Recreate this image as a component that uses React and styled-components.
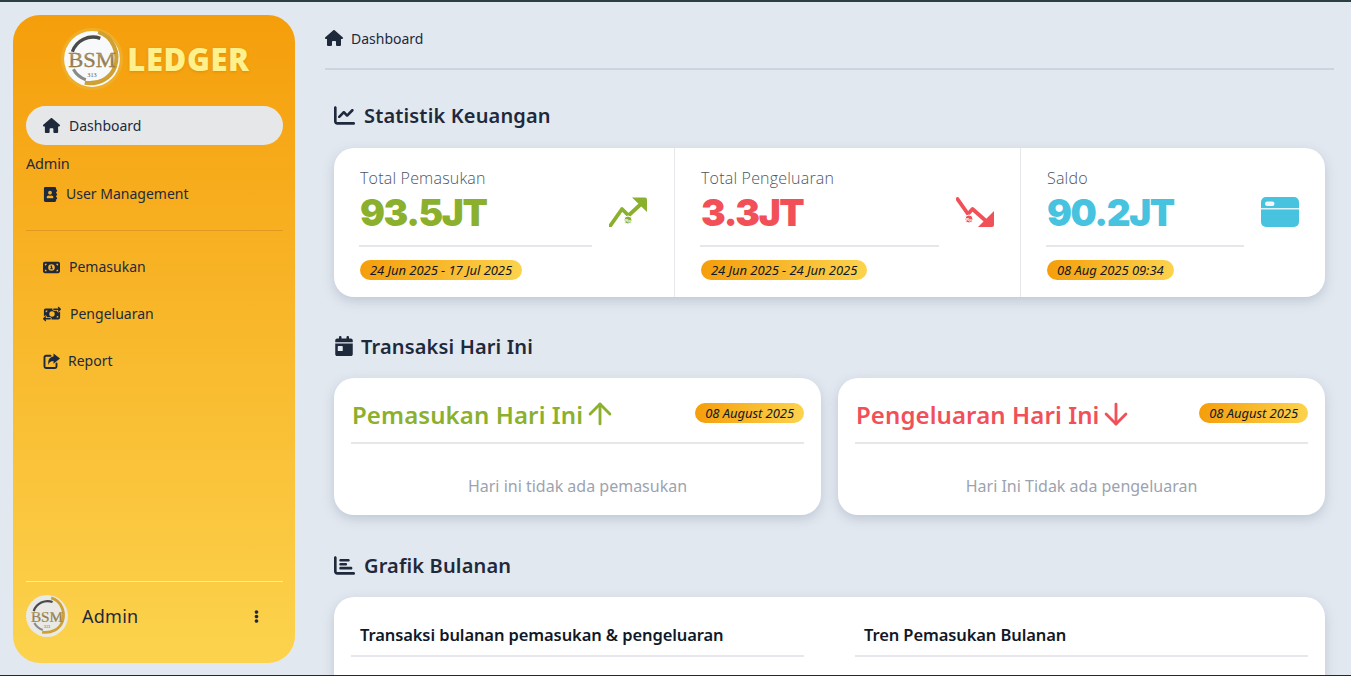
import React from "react";
import styled, { createGlobalStyle } from "styled-components";
import { FaAddressBook, FaEllipsisV } from "react-icons/fa";
import { FaHouse, FaMoneyBill1, FaMoneyBillTransfer, FaChartLine, FaCalendarDay, FaChartBar } from "react-icons/fa6";
import { ArrowUp, ArrowDown } from "lucide-react";

const Global = createGlobalStyle`
  html, body { margin: 0; padding: 0; height: 100%; overflow: hidden; }
  body { font-family: "Noto Sans", "Open Sans", sans-serif; background: #e2e8f0; color: #1e293b; }
  * { box-sizing: border-box; }
`;

const Frame = styled.div`
  height: 676px;
  display: flex;
  overflow: hidden;
  border-top: 2px solid #2c3e3f;
  border-bottom: 1px solid #1f2933;
  background: #e2e8f0;
`;

const Sidebar = styled.aside`
  flex: 0 0 282px;
  margin: 13px 0 12px 13px;
  padding: 13px 12px 26px 13px;
  border-radius: 27px;
  background: linear-gradient(180deg, #f59e0b 0%, #fcd34d 100%);
  display: flex;
  flex-direction: column;
`;

const Brand = styled.div`
  display: flex;
  align-items: center;
  justify-content: center;
  gap: 4px;
  height: 62px;
  margin-bottom: 16px;
  padding-left: 2px;
`;

const BrandName = styled.span`
  font-family: "Open Sans", sans-serif;
  font-weight: 800;
  font-size: 31px;
  letter-spacing: 0.6px;
  color: #fef08a;
  text-shadow: 0 1px 3px rgba(180, 100, 0, 0.35);
`;

const NavItem = styled.div`
  height: ${(p) => (p.$active ? "39px" : "auto")};
  display: flex;
  align-items: center;
  gap: ${(p) => p.$gap || 9}px;
  padding-left: ${(p) => p.$indent || 17}px;
  margin-top: ${(p) => p.$top || 0}px;
  border-radius: 20px;
  font-size: 14px;
  line-height: 20px;
  color: #1e293b;
  background: ${(p) => (p.$active ? "#e5e7e8" : "transparent")};
  svg { flex: none; }
`;

const GroupLabel = styled.div`
  margin-top: 8px;
  font-size: 14.5px;
  line-height: 20px;
  letter-spacing: -0.2px;
  color: #1e293b;
`;

const SideRule = styled.hr`
  border: 0;
  height: 1px;
  margin: 26px 0 26px;
  background: #e0981f;
`;

const Footer = styled.div`
  margin-top: auto;
  border-top: 1px solid #fdecae;
  padding-top: 13px;
  display: flex;
  align-items: center;
  gap: 14px;
`;

const UserName = styled.span`
  flex: 1;
  font-size: 18px;
  letter-spacing: 0.25px;
  color: #1e293b;
`;

const Kebab = styled.span`
  display: flex;
  margin-right: 20px;
`;

const Main = styled.main`
  flex: 1;
  min-width: 0;
  padding: 0 17px 0 30px;
`;

const Crumb = styled.div`
  height: 68px;
  display: flex;
  align-items: center;
  gap: 8px;
  padding-top: 6px;
  border-bottom: 2px solid #cbd5e1;
  font-size: 14px;
  color: #1e293b;
`;

const Content = styled.div`
  padding: 0 9px;
`;

const SectionTitle = styled.h2`
  margin: ${(p) => p.$top}px 0 ${(p) => p.$bottom}px;
  height: 28px;
  display: flex;
  align-items: center;
  gap: ${(p) => p.$gap || 9}px;
  font-size: 20px;
  font-weight: 600;
  letter-spacing: 0.15px;
  color: #1e293b;
`;

const Card = styled.div`
  background: #fff;
  border-radius: 20px;
  box-shadow: 0 4px 12px rgba(100, 116, 139, 0.28);
`;

const StatCard = styled(Card)`
  height: 149px;
  display: grid;
  grid-template-columns: 340px 346px 1fr;
`;

const Stat = styled.div`
  display: flex;
  gap: 17px;
  padding: 19px ${(p) => (p.$first ? 27 : 26)}px 0 25px;
  border-left: ${(p) => (p.$first ? "0" : "1px solid #e5e7eb")};
`;

const StatBody = styled.div`
  flex: 1;
  min-width: 0;
`;

const StatLabel = styled.div`
  padding-left: 1px;
  font-family: "Open Sans", sans-serif;
  font-weight: 300;
  font-size: 16px;
  line-height: 22px;
  letter-spacing: 0.2px;
  color: #4b5563;
`;

const StatValue = styled.div`
  padding: 2px 0 7px 1px;
  height: 47px;
  font-family: Inter, "Open Sans", sans-serif;
  font-weight: 900;
  font-size: 37px;
  line-height: 44px;
  letter-spacing: -1.4px;
  color: ${(p) => p.$color};
  border-bottom: 2px solid #e5e7eb;
  box-sizing: content-box;
`;

const Badge = styled.span`
  display: inline-block;
  height: 20px;
  padding: 0 10px;
  border-radius: 10px;
  background: linear-gradient(90deg, #f59e0b, #fcd34d);
  font-style: italic;
  font-size: 13px;
  line-height: 20px;
  letter-spacing: -0.05px;
  white-space: nowrap;
  color: #111827;
`;

const StatBadge = styled(Badge)`
  margin: 13px 0 0 1px;
`;

const StatIcon = styled.div`
  flex: 0 0 38px;
  margin-top: 30px;
  height: 30px;
  color: ${(p) => p.$color};
  svg { display: block; }
`;

const TwoCols = styled.div`
  display: grid;
  grid-template-columns: 1fr 1fr;
  gap: 17px;
`;

const TodayCard = styled(Card)`
  height: 137px;
  padding: 0 17px;
`;

const TodayHead = styled.div`
  height: 66px;
  display: flex;
  justify-content: space-between;
  border-bottom: 2px solid #e5e7eb;
`;

const TodayTitle = styled.div`
  display: flex;
  align-items: center;
  gap: 6px;
  height: 64px;
  padding: 8px 0 0 1px;
  font-size: 24px;
  font-weight: 600;
  letter-spacing: 0.1px;
  color: ${(p) => p.$color};
`;

const TodayArrow = styled.span`
  display: flex;
  margin: -6px -6px -6px -6px;
`;

const TodayBadge = styled(Badge)`
  margin-top: 25px;
`;

const Empty = styled.div`
  margin-top: 31px;
  text-align: center;
  font-size: 16px;
  line-height: 22px;
  color: #9ca3af;
`;

const ChartsCard = styled(Card)`
  height: 400px;
  padding: 24px 17px;
  display: grid;
  grid-template-columns: 1fr 1fr;
  column-gap: 51px;
  align-content: start;
`;

const ChartHead = styled.div`
  height: 36px;
  padding: 3px 9px 0;
  border-bottom: 2px solid #e5e7eb;
  font-size: 16.5px;
  font-weight: 600;
  line-height: 22px;
  letter-spacing: -0.1px;
  color: #111827;
`;

function Logo({ size, id, ring }) {
  return (
    <svg width={size} height={size} viewBox="0 0 60 60" role="img" aria-label="BSM logo" style={{ flex: "none" }}>
      <defs>
        <linearGradient id={id} x1="0" y1="0" x2="0" y2="1">
          <stop offset="0" stopColor="#d9b36a" />
          <stop offset="0.55" stopColor="#8f7b55" />
          <stop offset="1" stopColor="#c79a3c" />
        </linearGradient>
      </defs>
      {ring && <circle cx="30" cy="30" r="30" fill="#efae2a" />}
      <circle cx="30" cy="30" r={ring ? 27 : 30} fill={ring ? "#f8f9fb" : "#e9e9e6"} />
      <path d="M11 23 A 21 21 0 0 1 38 10" fill="none" stroke="#4a4a48" strokeWidth="3.2" />
      <path d="M36 4 C 50 8 57 24 52 38 C 48 49 36 55 23 53" fill="none" stroke="#cfa033" strokeWidth="4" />
      <path d="M12 40 A 21 21 0 0 0 24 50" fill="none" stroke="#8a8a86" strokeWidth="3" />
      <text x="30" y="38" textAnchor="middle" fontFamily="Liberation Serif, serif" fontSize="21" textLength="46" lengthAdjust="spacingAndGlyphs" fill={`url(#${id})`} stroke="#7d6a45" strokeWidth="0.3">BSM</text>
      <text x="30" y="47" textAnchor="middle" fontFamily="Liberation Serif, serif" fontSize="6" fill="#555">313</text>
    </svg>
  );
}

function ReportIcon() {
  return (
    <svg width="17" height="17" viewBox="0 0 17 17" fill="none">
      <path d="M7.5 2.8H3A1.5 1.5 0 0 0 1.5 4.3v9.2A1.5 1.5 0 0 0 3 15h9a1.5 1.5 0 0 0 1.5-1.5v-3" stroke="currentColor" strokeWidth="1.9" strokeLinecap="round" />
      <path d="M10.5 0.5 L17 5.6 L10.5 10.7 V8 C7.6 8 6.2 9 5.6 12 C4.4 7.4 6.4 3.9 10.5 3.4 Z" fill="currentColor" />
    </svg>
  );
}

function TrendUp() {
  return (
    <svg width="38" height="30" viewBox="0 0 38 30" fill="none">
      <path d="M1.5 28.5 L13 12 L19.5 18.5 L32 7" stroke="currentColor" strokeWidth="3.8" strokeLinecap="round" strokeLinejoin="round" />
      <path d="M23 0.5 H36 Q38 0.5 38 2.5 V15 Z" fill="currentColor" />
      <circle cx="19" cy="23" r="4" fill="currentColor" stroke="#fff" strokeWidth="1" />
      <text x="19" y="24.6" textAnchor="middle" fontSize="4.4" fontWeight="700" fontFamily="Liberation Sans, sans-serif" fill="#fff">Rp</text>
    </svg>
  );
}

function TrendDown() {
  return (
    <svg width="38" height="30" viewBox="0 0 38 30" fill="none">
      <path d="M1.5 2 L12 17 L16.5 12 L30 24" stroke="currentColor" strokeWidth="3.8" strokeLinecap="round" strokeLinejoin="round" />
      <path d="M38 14 V28 Q38 30 36 30 H22 Z" fill="currentColor" />
      <circle cx="13" cy="22" r="4" fill="currentColor" stroke="#fff" strokeWidth="1" />
      <text x="13" y="23.6" textAnchor="middle" fontSize="4.4" fontWeight="700" fontFamily="Liberation Sans, sans-serif" fill="#fff">Rp</text>
    </svg>
  );
}

function WalletCard({ color }) {
  return (
    <svg width="38" height="30" viewBox="0 0 38 30">
      <rect width="38" height="30" rx="5" fill={color} />
      <rect x="0" y="11.2" width="38" height="1.2" fill="#fff" />
      <rect x="4" y="4.5" width="9.5" height="4.5" rx="2.2" fill="#f4f6fa" />
    </svg>
  );
}

const GREEN = "#8bb02e";
const RED = "#f25059";
const BLUE = "#48c3df";

export default function App() {
  return (
    <>
      <Global />
      <Frame>
        <Sidebar>
          <Brand>
            <Logo size={62} id="logoA" ring />
            <BrandName>LEDGER</BrandName>
          </Brand>
          <NavItem $active>
            <FaHouse size={17} />
            Dashboard
          </NavItem>
          <GroupLabel>Admin</GroupLabel>
          <NavItem $top={11} $gap={8}>
            <FaAddressBook size={15} />
            User Management
          </NavItem>
          <SideRule />
          <NavItem>
            <FaMoneyBill1 size={17} />
            Pemasukan
          </NavItem>
          <NavItem $top={27}>
            <FaMoneyBillTransfer size={18} />
            Pengeluaran
          </NavItem>
          <NavItem $top={27} $gap={8}>
            <ReportIcon />
            Report
          </NavItem>
          <Footer>
            <Logo size={42} id="logoB" />
            <UserName>Admin</UserName>
            <Kebab><FaEllipsisV size={13} /></Kebab>
          </Footer>
        </Sidebar>
        <Main>
          <Crumb>
            <FaHouse size={18} />
            Dashboard
          </Crumb>
          <Content>
            <SectionTitle $top={31} $bottom={19}>
              <FaChartLine size={21} />
              Statistik Keuangan
            </SectionTitle>
            <StatCard>
              <Stat $first>
                <StatBody>
                  <StatLabel>Total Pemasukan</StatLabel>
                  <StatValue $color={GREEN}>93.5JT</StatValue>
                  <StatBadge>24 Jun 2025 - 17 Jul 2025</StatBadge>
                </StatBody>
                <StatIcon $color={GREEN}>
                  <TrendUp />
                </StatIcon>
              </Stat>
              <Stat>
                <StatBody>
                  <StatLabel>Total Pengeluaran</StatLabel>
                  <StatValue $color={RED}>3.3JT</StatValue>
                  <StatBadge>24 Jun 2025 - 24 Jun 2025</StatBadge>
                </StatBody>
                <StatIcon $color={RED}>
                  <TrendDown />
                </StatIcon>
              </Stat>
              <Stat>
                <StatBody>
                  <StatLabel>Saldo</StatLabel>
                  <StatValue $color={BLUE}>90.2JT</StatValue>
                  <StatBadge>08 Aug 2025 09:34</StatBadge>
                </StatBody>
                <StatIcon $color={BLUE}>
                  <WalletCard color={BLUE} />
                </StatIcon>
              </Stat>
            </StatCard>

            <SectionTitle $top={35} $bottom={18} $gap={7}>
              <FaCalendarDay size={20} />
              Transaksi Hari Ini
            </SectionTitle>
            <TwoCols>
              <TodayCard>
                <TodayHead>
                  <TodayTitle $color={GREEN}>
                    Pemasukan Hari Ini
                    <TodayArrow><ArrowUp size={34} strokeWidth={2} /></TodayArrow>
                  </TodayTitle>
                  <TodayBadge>08 August 2025</TodayBadge>
                </TodayHead>
                <Empty>Hari ini tidak ada pemasukan</Empty>
              </TodayCard>
              <TodayCard>
                <TodayHead>
                  <TodayTitle $color={RED}>
                    Pengeluaran Hari Ini
                    <TodayArrow><ArrowDown size={34} strokeWidth={2} /></TodayArrow>
                  </TodayTitle>
                  <TodayBadge>08 August 2025</TodayBadge>
                </TodayHead>
                <Empty>Hari Ini Tidak ada pengeluaran</Empty>
              </TodayCard>
            </TwoCols>

            <SectionTitle $top={36} $bottom={18} $gap={9}>
              <FaChartBar size={21} />
              Grafik Bulanan
            </SectionTitle>
            <ChartsCard>
              <ChartHead>Transaksi bulanan pemasukan &amp; pengeluaran</ChartHead>
              <ChartHead>Tren Pemasukan Bulanan</ChartHead>
            </ChartsCard>
          </Content>
        </Main>
      </Frame>
    </>
  );
}
